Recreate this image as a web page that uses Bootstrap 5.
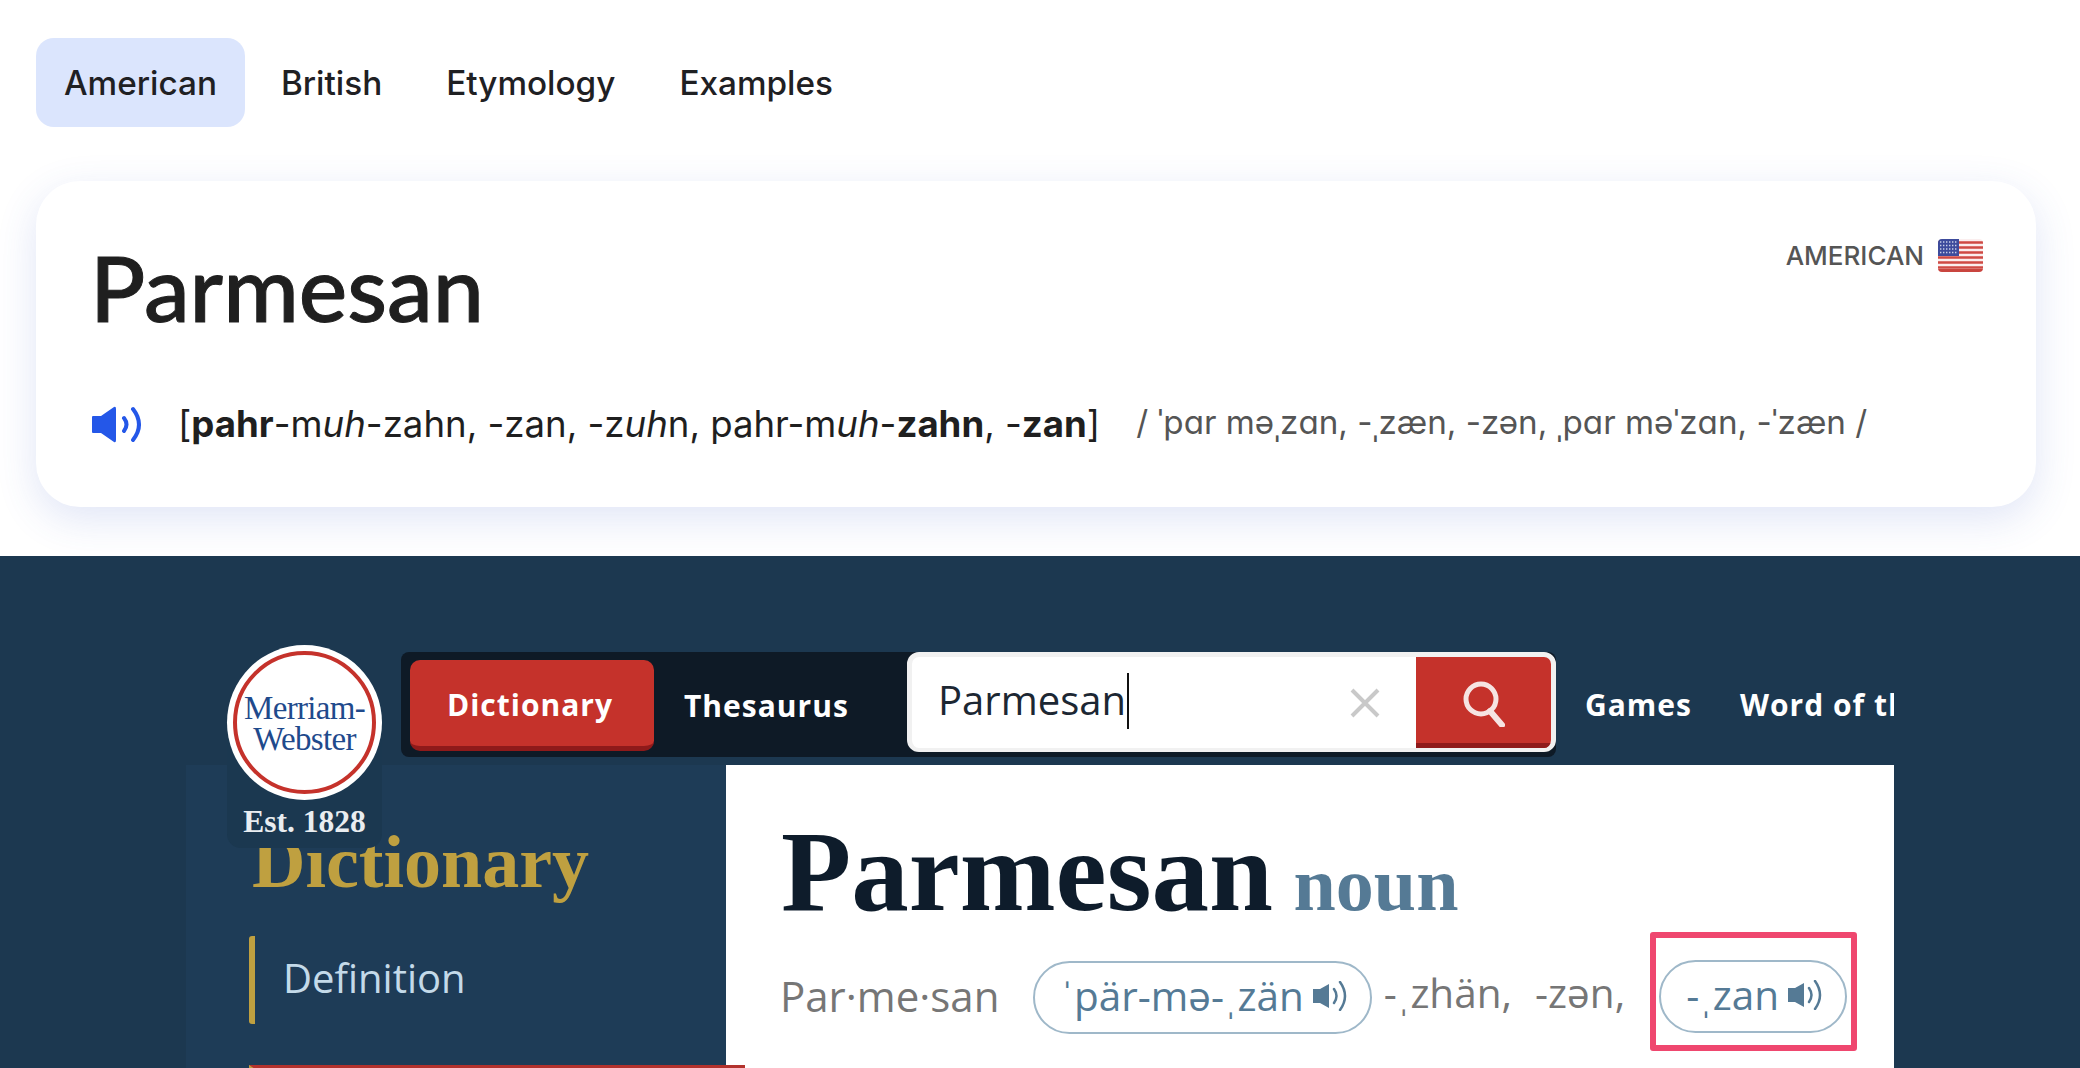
<!DOCTYPE html>
<html lang="en">
<head>
    <meta charset="UTF-8">
    <meta name="viewport" content="width=device-width, initial-scale=1">
    <title>Parmesan pronunciation</title>
    <link href="https://cdn.jsdelivr.net/npm/bootstrap@5.3.2/dist/css/bootstrap.min.css" rel="stylesheet">
    <style>
        html, body { height: 100%; overflow: hidden; }
        body { font-family: Inter, "Noto Sans", sans-serif; color: #1f1f1f; background: #fff; }

        /* top half: dictionary.com style */
        .word-tabs { padding: 38px 36px 0; }
        .word-tabs .nav-link { color: #1f2023; font-size: 33.300px; font-weight: 500; line-height: 91px; height: 89px; padding: 0 28px; border-radius: 18px; }
        .word-tabs .nav-link.active { background: #dbe5fd; color: #1f2023; }
        .word-card { margin: 54px 44px 49px 36px; height: 326px; padding: 0 40px 0 54px; border: 0; border-radius: 44px; box-shadow: 0 12px 40px rgba(60, 95, 200, .16); position: relative; }
        .word-title { font-family: Lato, Inter, sans-serif; font-size: 91.500px; font-weight: 500; -webkit-text-stroke: 1px #1f1f1f; line-height: 1; margin: 60px 0 64.500px; }
        .region-tag { position: absolute; top: 55px; right: 53px; font-size: 26px; font-weight: 500; color: #555; gap: 14px; }
        .say-row { font-size: 36.600px; white-space: nowrap; padding-left: 2px; }
        .say-row .ipa { font-size: 33.200px; color: #555; margin: 0 0 4px 36px; }
        .say-row .spell { margin-left: 36px; }

        /* bottom half: merriam-webster */
        .mw-section { background: #1c3850; height: 512px; position: relative; font-family: "Open Sans", sans-serif; }
        .mw-wrap { margin-left: 186px; width: 1708px; padding-top: 96px; }
        .mw-head { padding-left: 215px; height: 113px; overflow: hidden; white-space: nowrap; }
        .tab-bar { background: #0e1a26; width: 1155px; height: 105px; border-radius: 8px; padding: 8px 0 0 9px; flex: none; }
        .tab-bar .btn { color: #fff; font-size: 30px; font-weight: 700; letter-spacing: 1px; border: 0; height: 91px; }
        .tab-bar .btn-dict { background: #c5322b; width: 244px; border-radius: 10px; border-bottom: 5px solid #8f1a1a; padding: 2px 4px 0 0; }
        .tab-bar .btn-thes { margin-left: 18px; padding: 0 12px; }
        .search-box { margin-left: auto; margin-top: -8px; width: 649px; height: 100px; background: #fff; border: 5px solid #f1f1f1; border-bottom-width: 4px; border-radius: 12px; overflow: hidden; }
        .search-text { font-size: 40px; padding: 0 0 6px 26px; color: #1c2733; line-height: 55px; }
        .search-caret { width: 2px; height: 56px; background: #111; margin: 0 0 4px 1px; }
        .search-go { background: #c5322b; width: 135px; height: 91px; border-bottom: 5px solid #8f1a1a; padding-top: 8px; }
        .search-x { margin: 0 36px 0 auto; }
        .head-link { color: #fff; font-size: 30px; font-weight: 700; letter-spacing: 1px; margin-left: 29px; padding-bottom: 8px; }
        .head-link + .head-link { margin-left: 48px; }

        .mw-logo { position: absolute; z-index: 2; left: 227px; top: 89px; width: 155px; height: 203px; background: #1b3850; border-radius: 78px 78px 14px 14px; text-align: center; }
        .logo-disc { width: 155px; height: 155px; background: #fff; border-radius: 50%; padding: 6px; }
        .logo-ring { height: 143px; border: 4px solid #c5322b; border-radius: 50%; padding-top: 3px; font-family: "Liberation Serif", serif; font-size: 33px; line-height: 31px; color: #1f4a8c; letter-spacing: -.7px; }
        .logo-est { font-family: "Liberation Serif", serif; font-weight: 700; font-size: 31.500px; color: #e9edf0; line-height: 44px; }

        .mw-body { height: 303px; }
        .mw-side { background: #1e3c57; width: 540px; padding: 62px 0 0 66px; flex: none; position: relative; }
        .side-title { font-family: "Liberation Serif", serif; font-weight: 700; font-size: 74px; line-height: 70px; color: #bfa040; }
        .side-item { height: 88px; margin-top: 39px; border-left: 6px solid #bfa040; border-radius: 3px; padding-left: 28px; margin-left: -3px; font-size: 40px; line-height: 84px; color: #c4dae9; }
        .side-next { width: 496px; height: 20px; margin-top: 41px; margin-left: -3px; border-left: 6px solid #bfa040; border-top: 4px solid #b3322d; }
        .mw-main { background: #fff; flex: 1; padding-left: 55px; min-width: 0; }
        .entry-title { font-family: "Liberation Serif", serif; font-weight: 700; margin: 46px 0 0; line-height: 121px; font-size: 115px; color: #0e1c2b; white-space: nowrap; }
        .entry-title span { font-size: 76px; line-height: 1; color: #557a95; margin-left: -8px; }
        .entry-row { font-size: 40.500px; color: #767676; white-space: nowrap; }
        .entry-syll { font-size: 42px; margin: 7px 34px 0 -1px; }
        .entry-rest { margin: 4px 0 0 12px; word-spacing: 1px; }
        .say-pill { height: 73px; padding: 0 22px 3px 25px; border: 2px solid #9fb8c9; border-radius: 37px; color: #557a95; gap: 9px; }
        .entry-row > .say-pill { margin-top: 12px; }
        .pink-box { border: 6px solid #ef476f; border-radius: 3px; padding: 22px 4px 12px 3px; margin-left: 25px; }
    </style>
</head>
<body>

<svg width="0" height="0" class="position-absolute">
    <symbol id="sound-small" viewBox="0 0 35 30">
        <path d="M0 8H7L16 3V27L7 22H0Z" fill="#557a95"/>
        <path d="M21 8Q26 15 21 22M27 1Q37 15 27 29" fill="none" stroke="#557a95" stroke-width="2.500" stroke-linecap="round"/>
    </symbol>
</svg>

<ul class="nav nav-pills gap-2 word-tabs">
    <li class="nav-item"><a class="nav-link active" href="#">American</a></li>
    <li class="nav-item"><a class="nav-link" href="#">British</a></li>
    <li class="nav-item"><a class="nav-link" href="#">Etymology</a></li>
    <li class="nav-item"><a class="nav-link" href="#">Examples</a></li>
</ul>

<div class="card word-card">
    <h1 class="word-title">Parmesan</h1>
    <div class="region-tag d-flex align-items-center">
        <span>AMERICAN</span>
        <svg width="45" height="33" viewBox="0 0 45 33">
            <defs><clipPath id="flag-clip"><rect width="45" height="33" rx="4"/></clipPath></defs>
            <g clip-path="url(#flag-clip)">
                <rect width="45" height="33" fill="#fbeeee"/>
                <path d="M0 3.500H45M0 8.500H45M0 13.500H45M0 18.500H45M0 23.500H45M0 28.500H45" stroke="#cf4a44" stroke-width="2.600"/>
                <path d="M0 31.500H45" stroke="#c9453f" stroke-width="3"/>
                <rect width="21" height="17" fill="#3d4b9c"/>
                <path d="M2 3H20M2 6.500H20M2 10H20M2 13.500H20" stroke="#c9cfe8" stroke-width="1.400" stroke-dasharray="1.400 1.600"/>
            </g>
        </svg>
    </div>
    <div class="say-row d-flex align-items-center">
        <svg width="50" height="37" viewBox="0 0 50 37">
            <path d="M1 10H9L22 1Q24 0 24 3V34Q24 37 22 36L9 27H1Q0 27 0 26V11Q0 10 1 10Z" fill="#2457e8"/>
            <path d="M32 12Q37 18.500 32 25M41 3Q53 18.500 41 34" fill="none" stroke="#2457e8" stroke-width="4" stroke-linecap="round"/>
        </svg>
        <span class="spell">[<b>pahr</b>-m<i>uh</i>-zahn, -zan, -z<i>uh</i>n, pahr-m<i>uh</i>-<b>zahn</b>, -<b>zan</b>]</span>
        <span class="ipa">/ ˈpɑr məˌzɑn, -ˌzæn, -zən, ˌpɑr məˈzɑn, -ˈzæn /</span>
    </div>
</div>

<section class="mw-section">
    <div class="mw-logo">
        <div class="logo-disc">
            <div class="logo-ring d-flex flex-column justify-content-center">
                <div>Merriam-</div>
                <div>Webster</div>
            </div>
        </div>
        <div class="logo-est">Est. 1828</div>
    </div>

    <div class="mw-wrap">
        <div class="mw-head d-flex">
            <div class="tab-bar d-flex">
                <a class="btn btn-dict d-flex align-items-center justify-content-center" href="#">Dictionary</a>
                <a class="btn btn-thes d-flex align-items-center" href="#">Thesaurus</a>
                <div class="search-box d-flex align-items-center">
                    <span class="search-text">Parmesan</span>
                    <span class="search-caret"></span>
                    <svg class="search-x" width="30" height="30" viewBox="0 0 30 30">
                        <path d="M2 2L28 28M28 2L2 28" stroke="#c9c9c9" stroke-width="4"/>
                    </svg>
                    <div class="search-go d-flex align-items-center justify-content-center">
                        <svg width="42" height="46" viewBox="0 0 42 46">
                            <circle cx="18" cy="18" r="15" fill="none" stroke="#f6e4e2" stroke-width="5"/>
                            <path d="M27 30L39 44" stroke="#f6e4e2" stroke-width="6" stroke-linecap="round"/>
                        </svg>
                    </div>
                </div>
            </div>
            <a class="head-link d-flex align-items-center text-decoration-none" href="#">Games</a>
            <a class="head-link d-flex align-items-center text-decoration-none" href="#">Word of the Day</a>
        </div>

        <div class="mw-body d-flex">
            <aside class="mw-side">
                <div class="side-title">Dictionary</div>
                <div class="side-item">Definition</div>
                <div class="side-next"></div>
            </aside>
            <main class="mw-main">
                <h2 class="entry-title">Parmesan <span>noun</span></h2>
                <div class="entry-row d-flex align-items-center">
                    <span class="entry-syll">Par·me·san</span>
                    <span class="say-pill d-flex align-items-center">ˈpär-mə-ˌzän <svg width="35" height="30"><use href="#sound-small"/></svg></span>
                    <span class="entry-rest">-ˌzhän,&nbsp; -zən,</span>
                    <span class="pink-box d-flex">
                        <span class="say-pill d-flex align-items-center">-ˌzan <svg width="35" height="30"><use href="#sound-small"/></svg></span>
                    </span>
                </div>
            </main>
        </div>
    </div>
</section>

<script src="https://cdn.jsdelivr.net/npm/bootstrap@5.3.2/dist/js/bootstrap.bundle.min.js"></script>
</body>
</html>
